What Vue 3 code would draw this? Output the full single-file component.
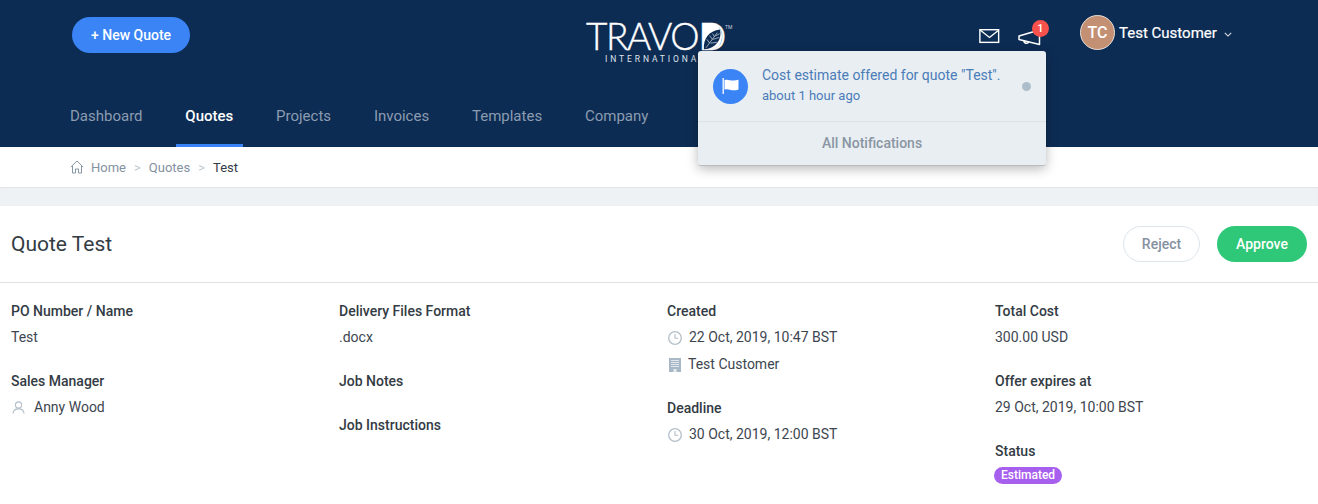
<script setup>
const nav = ['Dashboard', 'Quotes', 'Projects', 'Invoices', 'Templates', 'Company']
</script>

<template>
  <div class="page">
    <header class="header">
      <div class="top">
        <button class="new-quote">+ New Quote</button>
        <div class="logo">
          <div class="logo-word">TRAVOD<sup class="tm">TM</sup></div>
          <svg class="leaf" viewBox="0 0 20 28" width="19" height="27"><path d="M0 0H7C15 0 20 6 20 14S15 28 7 28H0z" fill="#fff"/><path d="M1 27.500C0 16 6 8 18 6.500C20 17 14 26.500 1 27.500z" fill="#0d2c54"/><path d="M3 26L15 10M7 21L4 17M10 17L7 13M12 14L10 11M8 21L15 20M10.500 17L17 15M13 13.500L17.500 11" stroke="#dfe4ea" stroke-width=".7" fill="none"/></svg>
          <div class="logo-sub">INTERNATIONAL</div>
        </div>
        <div class="actions">
          <svg class="mail" viewBox="0 0 22 16" width="21" height="15"><rect x=".75" y=".75" width="20" height="13.5" fill="none" stroke="#fff" stroke-width="1.5"/><path d="M1 1l10 8 10-8" fill="none" stroke="#fff" stroke-width="1.5"/></svg>
          <div class="bell">
            <svg viewBox="0 0 24 18" width="24" height="18"><path d="M1 7L21.500 1V15.500L1 10.500z" fill="none" stroke="#fff" stroke-width="1.500" stroke-linejoin="round"/><path d="M6 11.500a2.500 2.500 0 0 0 4.800 1.200" fill="none" stroke="#fff" stroke-width="1.500"/></svg>
            <span class="badge">1</span>
          </div>
          <div class="user">
            <span class="avatar">TC</span>
            <span class="user-name">Test Customer</span>
            <svg class="chev" viewBox="0 0 10 6" width="8" height="5"><path d="M1 1l4 4 4-4" fill="none" stroke="#dfe4ea" stroke-width="1.300"/></svg>
          </div>
        </div>
      </div>
      <nav class="nav">
        <a v-for="item in nav" :key="item" class="nav-item" :class="{ active: item === 'Quotes' }">{{ item }}</a>
      </nav>
    </header>

    <div class="crumbs">
      <svg viewBox="0 0 14 14" width="14" height="14"><path d="M.8 7L7 1l6.200 6M2.500 6v7h3V9h3v4h3V6" fill="none" stroke="#8696a5" stroke-width="1"/></svg>
      <span class="crumb home">Home</span>
      <span class="sep">&gt;</span>
      <span class="crumb">Quotes</span>
      <span class="sep">&gt;</span>
      <span class="crumb current">Test</span>
    </div>
    <div class="band"></div>

    <main class="card">
      <div class="title-row">
        <h1 class="title">Quote Test</h1>
        <div class="buttons">
          <button class="btn reject">Reject</button>
          <button class="btn approve">Approve</button>
        </div>
      </div>
      <div class="grid">
        <div class="col">
          <div class="label">PO Number / Name</div>
          <div class="value">Test</div>
          <div class="label next">Sales Manager</div>
          <div class="value icon-row user-row">
            <svg viewBox="0 0 14 14" width="13" height="13"><circle cx="7" cy="4.200" r="3.300" fill="none" stroke="#b3bfc9" stroke-width="1.200"/><path d="M1 13.500c.3-3.500 2.500-5 6-5s5.700 1.500 6 5" fill="none" stroke="#b3bfc9" stroke-width="1.200"/></svg>
            Anny Wood
          </div>
        </div>
        <div class="col">
          <div class="label">Delivery Files Format</div>
          <div class="value">.docx</div>
          <div class="label next">Job Notes</div>
          <div class="label notes">Job Instructions</div>
        </div>
        <div class="col">
          <div class="label">Created</div>
          <div class="value icon-row">
            <svg class="clock" viewBox="0 0 14 14" width="14" height="14"><circle cx="7" cy="7" r="6.300" fill="none" stroke="#b3bfc9" stroke-width="1.300"/><path d="M7 3v4.300h3.200" fill="none" stroke="#b3bfc9" stroke-width="1.100"/></svg>
            22 Oct, 2019, 10:47 BST
          </div>
          <div class="value icon-row building-row">
            <svg viewBox="0 0 12 14" width="12" height="14"><rect width="12" height="14" fill="#a9b8c6"/><path d="M2 2.500h8M2 4.500h8M2 6.500h8M2 8.500h8" stroke="#e6ebef" stroke-width=".9"/><rect x="4.500" y="11" width="3" height="3" fill="#e6ebef"/></svg>
            Test Customer
          </div>
          <div class="label deadline">Deadline</div>
          <div class="value icon-row">
            <svg class="clock" viewBox="0 0 14 14" width="14" height="14"><circle cx="7" cy="7" r="6.300" fill="none" stroke="#b3bfc9" stroke-width="1.300"/><path d="M7 3v4.300h3.200" fill="none" stroke="#b3bfc9" stroke-width="1.100"/></svg>
            30 Oct, 2019, 12:00 BST
          </div>
        </div>
        <div class="col">
          <div class="label">Total Cost</div>
          <div class="value">300.00 USD</div>
          <div class="label next">Offer expires at</div>
          <div class="value">29 Oct, 2019, 10:00 BST</div>
          <div class="label status">Status</div>
          <span class="pill">Estimated</span>
        </div>
      </div>
    </main>

    <div class="dropdown">
      <div class="note">
        <span class="note-icon">
          <svg viewBox="0 0 17 16" width="17" height="16"><path d="M1.200 0v16" stroke="#fff" stroke-width="1.300"/><path d="M2.500 2.200C6 .5 9.500 4 16.500 1.800V11.500C10 14 6 10 2.500 11.700z" fill="#fff"/></svg>
        </span>
        <div class="note-text">
          <div class="note-title">Cost estimate offered for quote "Test".</div>
          <div class="note-time">about 1 hour ago</div>
        </div>
        <span class="dot"></span>
      </div>
      <div class="all">All Notifications</div>
    </div>
  </div>
</template>

<style>
html, body { margin: 0; background: #fff; overflow: hidden; }
</style>

<style scoped>
.page { position: relative; width: 1318px; height: 504px; overflow: hidden; font-family: Roboto, "Liberation Sans", sans-serif; color: #333b44; font-size: 14px; }
.header { height: 147px; background: #0d2c54; display: flex; flex-direction: column; box-sizing: border-box; }
.top { position: relative; display: flex; height: 94px; padding-left: 72px; box-sizing: border-box; }
.new-quote { margin-top: 17px; width: 118px; height: 36px; border: 0; border-radius: 18px; background: #3a84f6; color: #fff; font: 500 14px Roboto, sans-serif; }
.logo { position: absolute; left: 586px; top: 19px; color: #fff; width: 150px; }
.logo-word { font: 300 37px/34px Lato, sans-serif; letter-spacing: -1.400px; display: flex; -webkit-text-stroke: .4px #fff; }
.leaf { position: absolute; left: 117px; top: 4px; }
.tm { font: 5px/5px Roboto, sans-serif; letter-spacing: 0; -webkit-text-stroke: 0; margin-top: 6px; margin-left: 0; color: #ccd; }
.logo-sub { font: 400 8.500px/10px Roboto, sans-serif; letter-spacing: 2.900px; margin-left: 19px; margin-top: 1px; color: #dfe4ea; white-space: nowrap; }
.actions { position: absolute; left: 979px; top: 14px; display: flex; align-items: flex-start; }
.mail { margin-top: 15px; }
.bell { position: relative; margin-left: 18px; margin-top: 15px; width: 23px; height: 17px; }
.badge { position: absolute; left: 14px; top: -9px; width: 17px; height: 17px; border-radius: 50%; background: #f9514c; color: #fff; font: 500 11px/17px Roboto, sans-serif; text-align: center; }
.user { display: flex; align-items: center; margin-left: 39px; margin-top: 1px; color: #fff; }
.avatar { width: 33px; height: 33px; border-radius: 50%; border: 1px solid #e8dfd8; background: #c49074; font: 500 16px/33px Roboto, sans-serif; text-align: center; }
.user-name { margin-left: 4px; margin-right: 7px; font-size: 15px; font-weight: 400; -webkit-text-stroke: .2px #fff; }
.chev { margin-top: 3px; }
.nav { display: flex; padding-left: 60.500px; gap: 23.800px; height: 53px; }
.nav-item { box-sizing: border-box; height: 53px; padding: 13px 9.500px 0; line-height: 18px; font-size: 15px; color: #8b9cb0; border-bottom: 3px solid transparent; }
.nav-item.active { color: #fff; font-weight: 500; border-bottom-color: #3a84f6; }
.crumbs { height: 40px; box-sizing: border-box; display: flex; align-items: center; padding: 0 0 1px 70px; font-size: 13px; color: #84919f; }
.crumb { position: relative; top: 1px; }
.crumb.home { margin-left: 7px; }
.sep { margin: 0 8px; color: #c4c9ce; position: relative; top: 1px; }
.crumb.current { color: #333b44; }
.band { height: 19px; background: #eff2f5; box-shadow: inset 0 1px 1px #e2e4e7; }
.card { background: #fff; }
.title-row { height: 77px; box-sizing: border-box; display: flex; justify-content: space-between; align-items: center; padding: 0 11px; border-bottom: 1px solid #dfe2e5; }
.title { margin: 0; font-size: 21px; font-weight: 400; color: #333b44; }
.buttons { display: flex; gap: 17px; margin-top: -1px; }
.btn { height: 36px; border-radius: 18px; font: 500 14px Roboto, sans-serif; box-sizing: border-box; }
.reject { width: 77px; background: #fff; border: 1px solid #dce4ea; color: #84919f; }
.approve { width: 90px; background: #2ec878; border: 0; color: #fff; }
.grid { display: grid; grid-template-columns: repeat(4, 328px); padding: 20px 0 0 11px; }
.label { font-weight: 500; line-height: 17px; color: #333b44; }
.value { line-height: 17px; margin-top: 9px; color: #3d4650; }
.next { margin-top: 27px; }
.notes { margin-top: 27px; }
.icon-row { display: flex; align-items: center; }
.clock { margin: 0 7px 0 1px; }
.user-row svg { margin: 0 9px 0 1px; }
.building-row { margin-top: 10px; }
.building-row svg { margin: 0 7px 0 2px; }
.deadline { margin-top: 27px; }
.status { margin-top: 27px; }
.pill { display: inline-block; margin: 7px 0 0 -1px; padding: 0 7px; height: 17px; line-height: 17px; border-radius: 9px; background: #a760ee; color: #fff; font-size: 12px; font-weight: 500; }
.dropdown { position: absolute; left: 698px; top: 51px; width: 348px; height: 115px; box-sizing: border-box; background: #e9eef2; border-radius: 3px; box-shadow: 0 3px 12px rgba(0, 0, 0, .28); border-bottom: 1px solid #bbb; }
.note { height: 70px; display: flex; align-items: center; padding-left: 15px; border-bottom: 1px solid #dde2e6; position: relative; }
.note-icon { width: 35px; height: 35px; border-radius: 50%; background: #3a84f6; display: flex; align-items: center; justify-content: center; }
.note-text { margin: -2px 0 0 14px; color: #4a7cb8; }
.note-title { line-height: 17px; }
.note-time { font-size: 13px; line-height: 15px; margin-top: 4px; }
.dot { position: absolute; left: 324px; top: 31px; width: 9px; height: 9px; border-radius: 50%; background: #aebdca; }
.all { text-align: center; line-height: 43px; font-weight: 500; color: #8a96a3; }
</style>
